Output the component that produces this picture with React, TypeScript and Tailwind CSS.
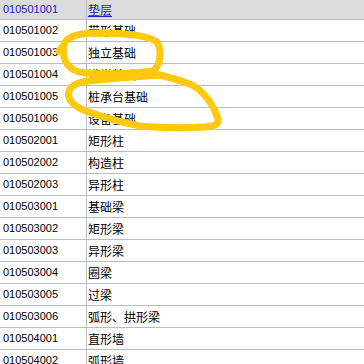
import React from 'react';

const rows: [string, string][] = [
  ['010501001', '垫层'],
  ['010501002', '带形基础'],
  ['010501003', '独立基础'],
  ['010501004', '满堂基础'],
  ['010501005', '桩承台基础'],
  ['010501006', '设备基础'],
  ['010502001', '矩形柱'],
  ['010502002', '构造柱'],
  ['010502003', '异形柱'],
  ['010503001', '基础梁'],
  ['010503002', '矩形梁'],
  ['010503003', '异形梁'],
  ['010503004', '圈梁'],
  ['010503005', '过梁'],
  ['010503006', '弧形、拱形梁'],
  ['010504001', '直形墙'],
  ['010504002', '弧形墙'],
];

export default function App() {
  return (
    <div className="relative w-[364px] h-[364px] overflow-hidden bg-white">
      <div className="flex flex-col">
        {rows.map(([code, name], i) => {
          const first = i === 0;
          return (
            <div
              key={code}
              className={`flex border-b border-[#b6bdc8] ${first ? 'h-[20px] bg-[#dcdcdc]' : 'h-[22px] bg-white'}`}
            >
              <div
                className={`w-[86px] shrink-0 pl-[3px] flex items-center text-[11px] font-['Liberation_Sans',Tahoma,sans-serif] ${first ? 'text-[#1c1cb8]' : 'text-black'}`}
              >
                {code}
              </div>
              <div
                className={`flex-1 border-l border-[#b6bdc8] pl-[1px] flex items-center text-[12px] font-['Noto_Sans_CJK_SC',sans-serif] ${first ? 'text-[#1c1cb8] underline' : 'text-black'}`}
              >
                {name}
              </div>
            </div>
          );
        })}
      </div>

      {/* hand-drawn highlight marks */}
      <svg className="absolute inset-0 pointer-events-none" width="364" height="364" viewBox="0 0 364 364">
        <g fill="none" stroke="#ffc90e" strokeWidth="7" strokeLinecap="round" strokeLinejoin="round">
          <path d="M59 51 L63 46 C66 37 78 33 95 33 C120 33 148 35 157 42 C162 50 161 65 153 71 C130 74 96 75 79 72 C65 68 62 56 64 46" />
          <path d="M150 73 C165 76 180 80 192 85 C205 92 214 106 218 119 C219 125 214 126 205 127 C185 128 160 128 140 126 C120 122 100 116 86 111 C70 105 66 96 70 89 C74 82 90 80 110 79 C130 77 150 76 162 75" />
        </g>
      </svg>
    </div>
  );
}
